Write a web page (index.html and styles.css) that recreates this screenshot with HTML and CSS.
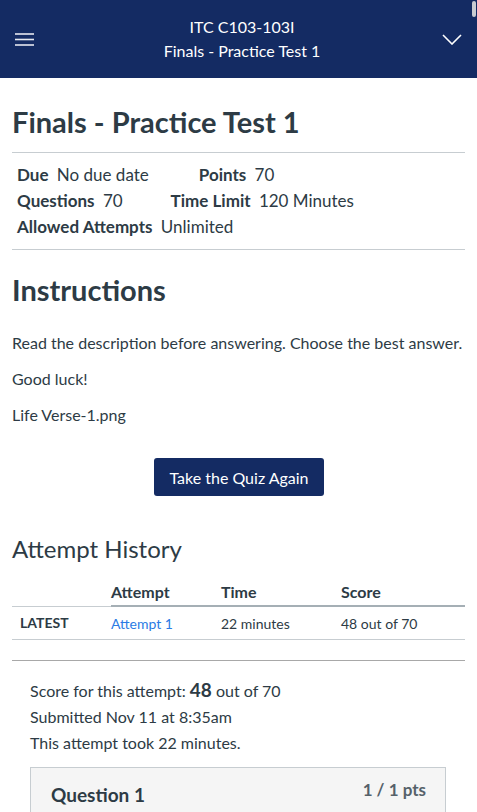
FILE: index.html
```html
<!DOCTYPE html>
<html lang="en">
<head>
<meta charset="utf-8">
<title>Finals - Practice Test 1</title>
<link rel="stylesheet" href="styles.css">
</head>
<body>
<header class="topbar">
  <button class="icon-btn menu" aria-label="Menu">
    <svg width="19" height="13" viewBox="0 0 19 13"><g stroke="#e6e9f0" stroke-width="1.6"><line x1="0" y1="1" x2="19" y2="1"/><line x1="0" y1="6.5" x2="19" y2="6.5"/><line x1="0" y1="12" x2="19" y2="12"/></g></svg>
  </button>
  <div class="topbar-title">
    <div>ITC C103-103I</div>
    <div>Finals - Practice Test 1</div>
  </div>
  <button class="icon-btn chevron" aria-label="More">
    <svg width="20" height="11" viewBox="0 0 20 11"><polyline points="1,1 10,10 19,1" fill="none" stroke="#ffffff" stroke-width="1.6"/></svg>
  </button>
  <div class="scroll-thumb"></div>
</header>

<main class="content">
  <h1 class="quiz-title">Finals - Practice Test 1</h1>
  <div class="details">
    <div class="detail-row">
      <span class="detail"><b>Due</b> No due date</span>
      <span class="detail"><b>Points</b> 70</span>
    </div>
    <div class="detail-row">
      <span class="detail"><b>Questions</b> 70</span>
      <span class="detail"><b>Time Limit</b> 120 Minutes</span>
    </div>
    <div class="detail-row">
      <span class="detail"><b>Allowed Attempts</b> Unlimited</span>
    </div>
  </div>

  <h2 class="section-title">Instructions</h2>
  <p class="para first">Read the description before answering. Choose the best answer.</p>
  <p class="para">Good luck!</p>
  <p class="para">Life Verse-1.png</p>

  <div class="btn-wrap"><button class="btn">Take the Quiz Again</button></div>

  <h2 class="history-title">Attempt History</h2>
  <table class="history">
    <thead>
      <tr><th class="c0"></th><th class="c1">Attempt</th><th class="c2">Time</th><th class="c3">Score</th></tr>
    </thead>
    <tbody>
      <tr><td class="c0 latest">LATEST</td><td class="c1"><a href="#">Attempt 1</a></td><td class="c2">22 minutes</td><td class="c3">48 out of 70</td></tr>
    </tbody>
  </table>

  <hr class="rule">

  <div class="summary">
    <div>Score for this attempt: <span class="big">48</span> out of 70</div>
    <div>Submitted Nov 11 at 8:35am</div>
    <div>This attempt took 22 minutes.</div>
  </div>

  <div class="question">
    <div class="q-head">
      <span class="q-name">Question 1</span>
      <span class="q-pts">1 / 1 pts</span>
    </div>
    <div class="q-body"></div>
  </div>
</main>
</body>
</html>
```
FILE: styles.css
```css
html, body {
  margin: 0;
  padding: 0;
  overflow: hidden;
}
body {
  font-family: Lato, "Open Sans", "Liberation Sans", sans-serif;
  color: #2d3b45;
  background: #ffffff;
  width: 477px;
}
.topbar {
  position: relative;
  height: 78px;
  background: #142b63;
  display: flex;
  align-items: center;
  justify-content: space-between;
  color: #ffffff;
}
.icon-btn {
  background: none;
  border: 0;
  padding: 0;
  display: flex;
  align-items: center;
}
.menu { margin-left: 15px; margin-top: 1px; }
.chevron { margin-right: 15px; margin-top: 1px; }
.topbar-title {
  text-align: center;
  font-size: 16px;
  line-height: 24px;
  margin-left: 8px;
}
.scroll-thumb {
  position: absolute;
  right: 1px;
  top: 1px;
  width: 4px;
  height: 16px;
  border-radius: 2px;
  background: #c9ccd2;
}
.content {
  padding: 0 12px;
}
.quiz-title {
  margin: 0;
  padding: 28px 0 14px;
  font-size: 29px;
  line-height: 32px;
  font-weight: 700;
  border-bottom: 1px solid #c7cdd1;
}
.details {
  padding: 9px 5px 9px;
  border-bottom: 1px solid #c7cdd1;
}
.detail-row {
  display: flex;
  gap: 48px;
  font-size: 17px;
  line-height: 26px;
}
.detail b { font-weight: 700; margin-right: 4px; }
.detail-row:first-child { gap: 50px; }
.section-title {
  margin: 0;
  padding: 22px 0 0;
  font-size: 29px;
  line-height: 36px;
  font-weight: 700;
}
.para {
  margin: 0;
  padding-top: 15px;
  font-size: 16px;
  line-height: 21px;
}
.para.first { padding-top: 24px; }
.btn-wrap {
  display: flex;
  justify-content: center;
  padding-top: 33px;
}
.btn {
  font-family: inherit;
  background: #142b63;
  color: #ffffff;
  border: 0;
  border-radius: 3px;
  height: 38px;
  padding: 0 15px;
  font-size: 16px;
  margin-left: 1px;
}
.history-title {
  margin: 0;
  padding-top: 39px;
  font-size: 24px;
  line-height: 28px;
  font-weight: 400;
}
.history {
  width: 100%;
  border-collapse: collapse;
  margin-top: 16px;
  font-size: 14px;
}
.history th {
  text-align: left;
  font-size: 16px;
  font-weight: 700;
  height: 24px;
  padding: 0 0 2px;
  border-bottom: 2px solid #a5afb5;
  vertical-align: middle;
}
.history th.c0 { border-bottom: 1px solid #c7cdd1; }
.history td {
  height: 32px;
  padding: 0;
  border-bottom: 1px solid #c7cdd1;
  vertical-align: middle;
}
.c0 { width: 99px; }
.c1 { width: 110px; }
.c2 { width: 120px; }
.latest {
  font-weight: 700;
  padding-left: 8px !important;
  box-sizing: border-box;
}
.history a { color: #2b7be4; text-decoration: none; }
.rule {
  margin: 20px 0 0;
  border: 0;
  border-top: 1px solid #a8a8a8;
  height: 0;
}
.summary {
  padding: 16px 18px 0;
  font-size: 16px;
  line-height: 26px;
}
.big { font-size: 19px; font-weight: 700; }
.question {
  margin: 11px 19px 0 18px;
  background: #f5f5f5;
  border: 1px solid #c7cdd1;
  border-bottom: 0;
}
.q-head {
  display: flex;
  justify-content: space-between;
  align-items: baseline;
  padding: 15px 19px 0 20px;
}
.q-name { font-size: 19px; font-weight: 700; }
.q-pts { font-size: 17px; font-weight: 700; color: #55616a; position: relative; top: -6px; }
.q-body { height: 80px; }
```
